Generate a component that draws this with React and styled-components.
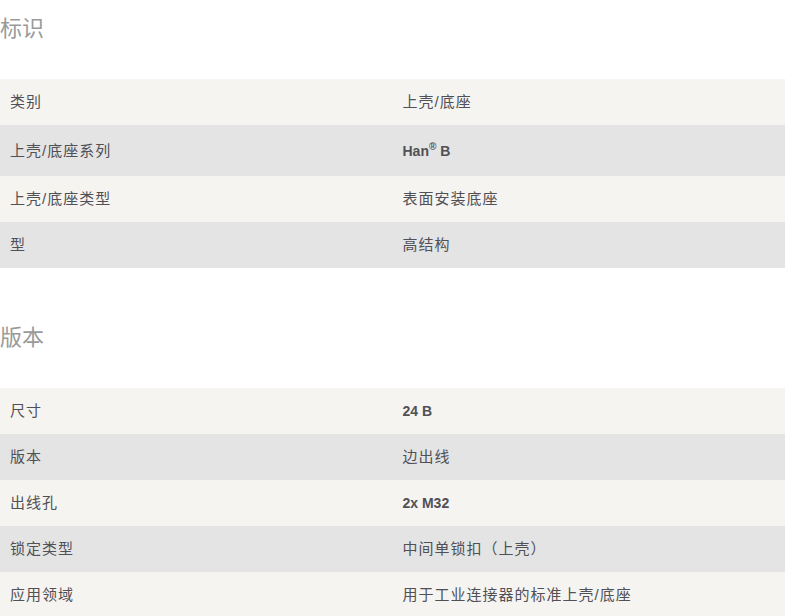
import styled, { createGlobalStyle } from "styled-components";

const GlobalStyle = createGlobalStyle`
  html, body {
    margin: 0;
    padding: 0;
    background: #ffffff;
    font-family: "Liberation Sans", Arial, "Noto Sans CJK SC", sans-serif;
  }
`;

const Page = styled.div`
  width: 785px;
  padding-top: 14px;
`;

const Section = styled.section`
  margin-bottom: 55px;
`;

const Heading = styled.h2`
  margin: 0 0 35px 0;
  font-size: 22px;
  line-height: 30px;
  font-weight: normal;
  color: #9a9a9a;
`;

const Table = styled.div`
  display: grid;
  grid-template-columns: 1fr 1fr;
`;

const Row = styled.div`
  display: contents;

  & > div {
    background: ${({ $alt }) => ($alt ? "#e4e4e4" : "#f5f4f0")};
  }
`;

const Cell = styled.div`
  padding: ${({ $tall }) => ($tall ? "15px 10px 14px" : "12px 10px")};
  font-size: ${({ $bold }) => ($bold ? "14px" : "15px")};
  letter-spacing: ${({ $bold }) => ($bold ? "0" : "1px")};
  line-height: 22px;
  color: #515056;
  font-weight: ${({ $bold }) => ($bold ? "bold" : "normal")};

  & sup {
    font-size: 10px;
    line-height: 0;
    vertical-align: 6px;
  }
`;

const identification = [
  ["类别", "上壳/底座"],
  ["上壳/底座系列", <>Han<sup>®</sup> B</>, true, true],
  ["上壳/底座类型", "表面安装底座"],
  ["型", "高结构"],
];

const version = [
  ["尺寸", "24 B", true],
  ["版本", "边出线"],
  ["出线孔", "2x M32", true],
  ["锁定类型", "中间单锁扣（上壳）"],
  ["应用领域", "用于工业连接器的标准上壳/底座"],
];

function SpecTable({ rows }) {
  return (
    <Table>
      {rows.map(([label, value, bold, tall], i) => (
        <Row key={i} $alt={i % 2 === 1}>
          <Cell $tall={tall}>{label}</Cell>
          <Cell $tall={tall} $bold={bold}>{value}</Cell>
        </Row>
      ))}
    </Table>
  );
}

export default function App() {
  return (
    <Page>
      <GlobalStyle />
      <Section>
        <Heading>标识</Heading>
        <SpecTable rows={identification} />
      </Section>
      <Section>
        <Heading>版本</Heading>
        <SpecTable rows={version} />
      </Section>
    </Page>
  );
}
